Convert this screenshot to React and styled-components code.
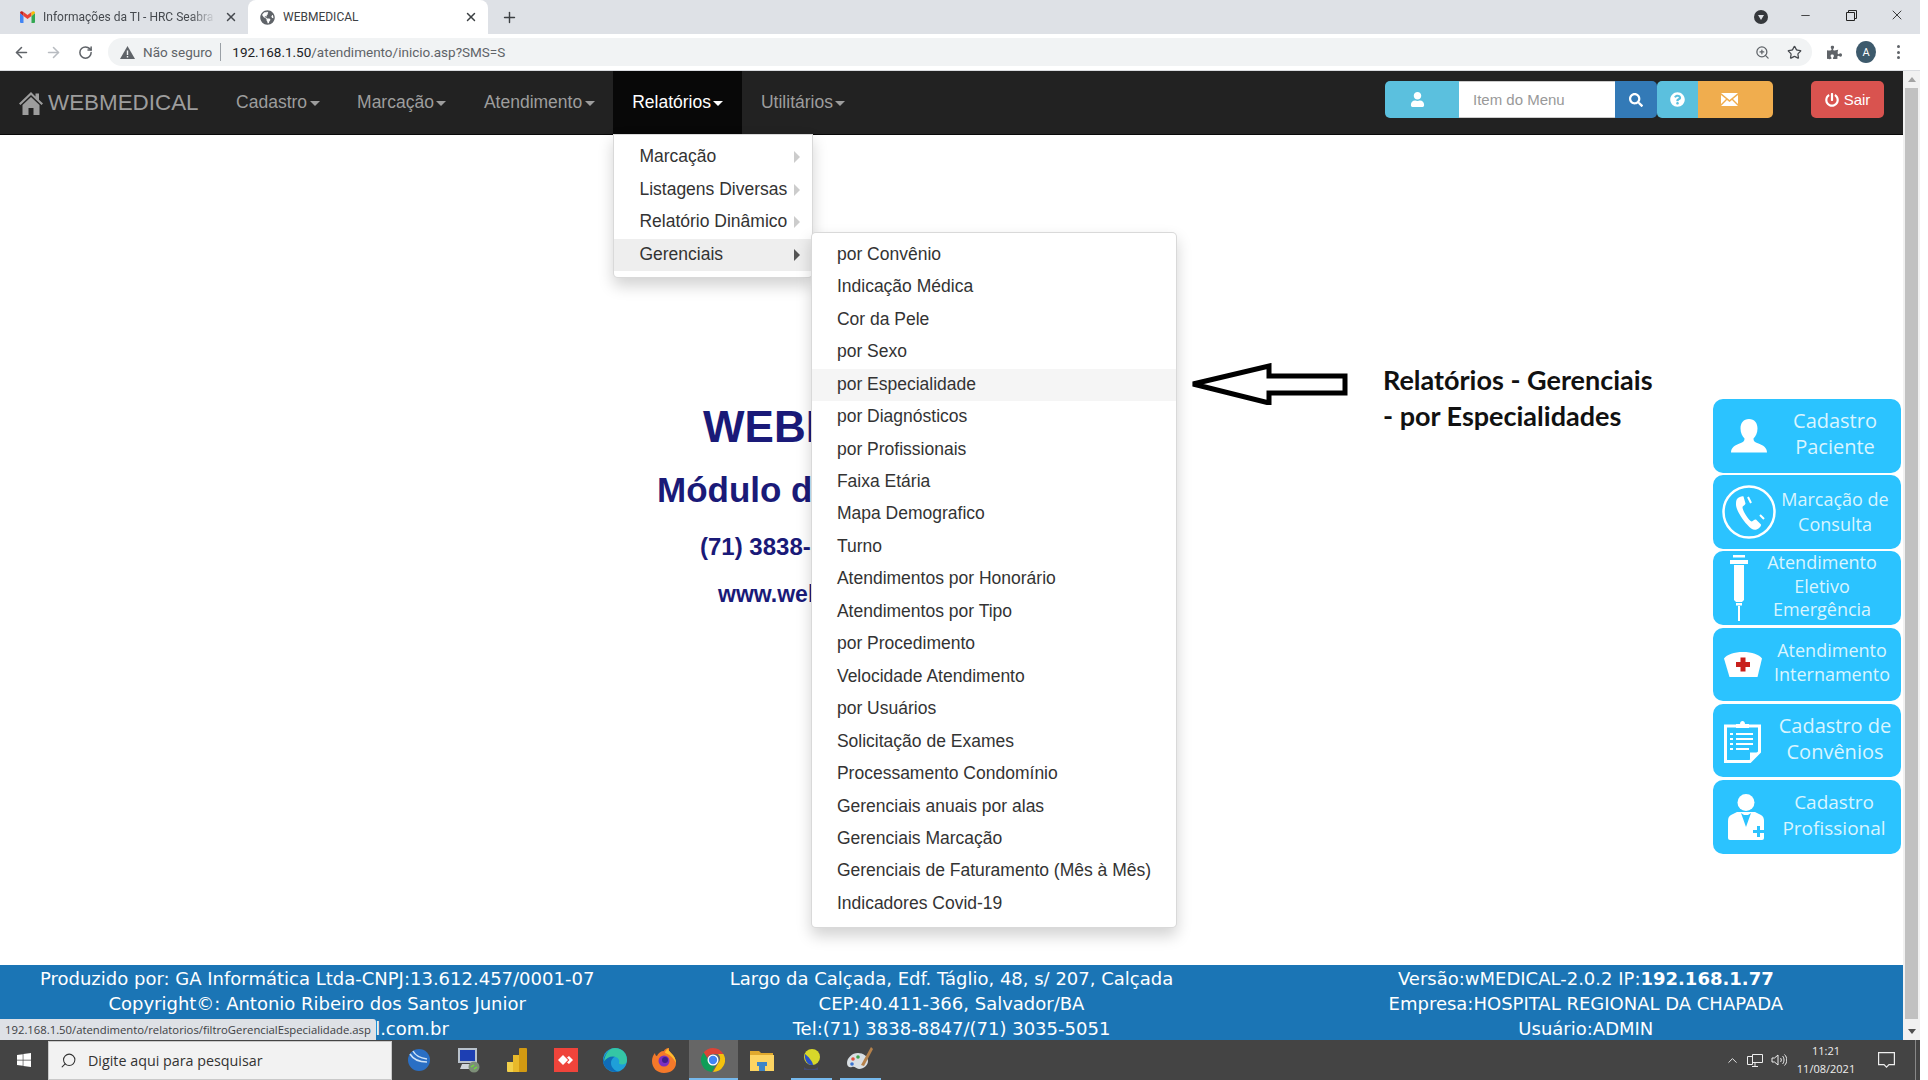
import styled, { createGlobalStyle } from "styled-components";
import {
	FaUser,
	FaSearch,
	FaQuestionCircle,
	FaPowerOff,
	FaWindows,
	FaGlobeAmericas,
	FaPuzzlePiece,
} from "react-icons/fa";
import { ArrowLeft, ArrowRight, RotateCw, ZoomIn, Star, X, Plus, Minus, ChevronUp, Search } from "lucide-react";

const GlobalStyle = createGlobalStyle`
	html, body { margin: 0; padding: 0; background: #fff; overflow: hidden; }
	* { box-sizing: border-box; }
`;

const Screen = styled.div`
	width: 1920px;
	height: 1080px;
	display: flex;
	flex-direction: column;
	font-family: "Liberation Sans", Arial, sans-serif;
	overflow: hidden;
`;

/* ---- browser chrome ---- */
const TabStrip = styled.div`
	height: 34px;
	flex: none;
	display: flex;
	align-items: stretch;
	background: #dee1e6;
	padding-left: 8px;
`;
const Tab = styled.div`
	width: 240px;
	display: flex;
	align-items: center;
	gap: 8px;
	padding: 0 10px 0 12px;
	font: 12px Roboto, sans-serif;
	color: ${(p) => (p.$active ? "#3c4043" : "#45494e")};
	background: ${(p) => (p.$active ? "#fff" : "transparent")};
	border-radius: 8px 8px 0 0;
	svg { flex: none; }
`;
const TabTitle = styled.span`
	flex: 1;
	white-space: nowrap;
	overflow: hidden;
	-webkit-mask-image: ${(p) => (p.$fade ? "linear-gradient(to right, #000 85%, transparent)" : "none")};
`;
const NewTab = styled.div`
	width: 42px;
	display: flex;
	align-items: center;
	justify-content: center;
	color: #3c4043;
`;
const MediaDot = styled.div`
	margin-left: auto;
	margin-right: 14px;
	align-self: center;
	width: 14px;
	height: 14px;
	border-radius: 50%;
	background: #35383c;
	display: flex;
	align-items: center;
	justify-content: center;
	&::after {
		content: "";
		border: 3.5px solid transparent;
		border-top: 5px solid #dee1e6;
		border-bottom: 0;
	}
`;
const WinButton = styled.div`
	width: 46px;
	display: flex;
	align-items: center;
	justify-content: center;
	padding-bottom: 4px;
	color: #222;
`;

const Toolbar = styled.div`
	height: 37px;
	flex: none;
	display: flex;
	align-items: center;
	padding-left: 5px;
	background: #fff;
	border-bottom: 1px solid #dadce0;
`;
const ToolIcon = styled.div`
	width: ${(p) => p.$w || 32}px;
	flex: none;
	display: flex;
	justify-content: center;
	color: ${(p) => p.$color || "#5f6368"};
`;
const Omnibox = styled.div`
	width: 1704px;
	height: 28px;
	margin-left: 7px;
	flex: none;
	display: flex;
	align-items: center;
	padding: 0 2px 0 12px;
	border-radius: 14px;
	background: #f1f3f4;
	font: 13.5px Roboto, sans-serif;
	color: #5f6368;
`;
const NotSecure = styled.span`
	margin-left: 8px;
	padding-right: 8px;
	border-right: 1px solid #9aa0a6;
	line-height: 18px;
`;
const Url = styled.span`
	margin-left: 11px;
	flex: 1;
	b { font-weight: 400; color: #202124; }
`;
const Avatar = styled.div`
	width: 22px;
	height: 22px;
	border-radius: 50%;
	background: #3d5a6c;
	color: #fff;
	font: 11px Roboto, sans-serif;
	display: flex;
	align-items: center;
	justify-content: center;
`;
const Dots = styled.div`
	display: flex;
	flex-direction: column;
	gap: 2.5px;
	i { width: 3px; height: 3px; border-radius: 50%; background: #5f6368; }
`;

/* ---- page ---- */
const Viewport = styled.div`
	flex: 1;
	min-height: 0;
	display: flex;
`;
const Page = styled.div`
	flex: 1;
	min-width: 0;
	display: flex;
	flex-direction: column;
`;
const ScrollTrack = styled.div`
	width: 17px;
	flex: none;
	background: #f1f1f1;
	display: flex;
	flex-direction: column;
	align-items: center;
	padding: 6px 0;
`;
const ScrollUp = styled.i`
	border: 4px solid transparent;
	border-bottom: 5px solid #a3a3a3;
	border-top: 0;
`;
const ScrollDown = styled.i`
	border: 4px solid transparent;
	border-top: 5px solid #505050;
	border-bottom: 0;
`;
const ScrollThumb = styled.div`
	flex: 1;
	width: 13px;
	margin: 6px 0 10px;
	background: #c1c1c1;
`;

const Navbar = styled.nav`
	height: 64px;
	flex: none;
	display: flex;
	background: #222;
	border-bottom: 1px solid #080808;
	position: relative;
	z-index: 5;
`;
const Brand = styled.div`
	display: flex;
	align-items: center;
	gap: 5px;
	padding-left: 19px;
	padding-right: 18.75px;
	font-size: 22.4px;
	color: #9d9d9d;
`;
const NavItem = styled.div`
	position: relative;
	display: flex;
	align-items: center;
	padding: 0 18.75px 1px;
	font-size: 17.5px;
	color: ${(p) => (p.$active ? "#fff" : "#9d9d9d")};
	background: ${(p) => (p.$active ? "#080808" : "transparent")};
`;
const Caret = styled.i`
	margin-left: 2.5px;
	margin-top: 2px;
	border: 5px solid transparent;
	border-top: 5px solid currentColor;
	border-bottom: 0;
`;
const DropMenu = styled.div`
	position: absolute;
	top: ${(p) => (p.$sub ? "-7px" : "100%")};
	left: ${(p) => (p.$sub ? "calc(100% - 1px)" : "0")};
	width: ${(p) => (p.$sub ? "auto" : "199.5px")};
	padding: 6.25px 0;
	background: #fff;
	border: 1px solid rgba(0, 0, 0, 0.15);
	border-radius: ${(p) => (p.$sub ? "5px" : "0 0 5px 5px")};
	box-shadow: 0 7.5px 15px rgba(0, 0, 0, 0.175);
`;
const MenuRow = styled.div`
	position: relative;
	height: 32.46px;
	line-height: 31.5px;
	padding: 0 25px;
	font-size: 17.5px;
	white-space: nowrap;
	color: #333;
	background: ${(p) => (p.$open ? "#eee" : p.$hover ? "#f5f5f5" : "transparent")};
`;
const SubArrow = styled.i`
	position: absolute;
	right: 12px;
	top: 10px;
	border: 6px solid transparent;
	border-left: 6px solid ${(p) => (p.$open ? "#555" : "#ccc")};
	border-right: 0;
`;
const Controls = styled.div`
	margin-left: auto;
	margin-top: 10px;
	height: 37px;
	display: flex;
	font-size: 15px;
`;
const Addon = styled.div`
	width: ${(p) => p.$w}px;
	padding-right: ${(p) => p.$shift || 0}px;
	display: flex;
	align-items: center;
	justify-content: center;
	color: #fff;
	background: ${(p) => p.$bg};
	border-radius: ${(p) => p.$radius || "0"};
`;
const MenuInput = styled.input`
	width: 156px;
	height: 37px;
	border: 1px solid #ccc;
	border-width: 1px 0;
	padding: 0 14px;
	font: 15px "Liberation Sans", Arial, sans-serif;
	outline: none;
	&::placeholder { color: #999; opacity: 1; }
`;
const ExitButton = styled.div`
	margin: 10px 19px 0 38px;
	width: 73px;
	height: 37px;
	display: flex;
	align-items: center;
	justify-content: center;
	gap: 5px;
	border-radius: 5px;
	background: #d9534f;
	color: #fff;
	font-size: 15px;
`;

const Main = styled.main`
	flex: 1;
	min-height: 0;
	position: relative;
	background: #fff;
	padding-top: 268px;
`;
const Line = styled.div`
	margin-left: ${(p) => p.$left}px;
	margin-top: ${(p) => p.$gap || 0}px;
	font-size: ${(p) => p.$size}px;
	line-height: ${(p) => p.$lh}px;
	font-weight: 700;
	color: #1a1a78;
	white-space: nowrap;
`;

const Callout = styled.div`
	position: absolute;
	left: 1189px;
	top: 228px;
	display: flex;
	width: 480px;
`;
const CalloutText = styled.div`
	margin-left: 33px;
	margin-top: -1px;
	width: 285px;
	font: 700 27px/36px Lato, sans-serif;
	color: #111;
`;

const SideMenu = styled.div`
	position: absolute;
	right: 2px;
	top: 264px;
	width: 188px;
	display: flex;
	flex-direction: column;
	gap: 2.6px;
`;
const SideButton = styled.div`
	height: 73.6px;
	display: flex;
	align-items: center;
	border-radius: 10px;
	background: #2bc3ff;
	color: #d9f5ff;
`;
const SideIcon = styled.div`
	flex: none;
	width: ${(p) => p.$slot}px;
	padding-left: ${(p) => p.$pad}px;
	display: flex;
	align-items: center;
`;
const SideLabel = styled.div`
	flex: 1;
	padding-right: ${(p) => p.$pr || 0}px;
	padding-bottom: ${(p) => p.$up || 0}px;
	text-align: center;
	font: ${(p) => p.$size || 19}px/${(p) => p.$lh || 26}px "Open Sans", sans-serif;
	white-space: nowrap;
`;

const Footer = styled.footer`
	height: 75px;
	flex: none;
	position: relative;
	display: grid;
	grid-template-columns: 1fr 1fr 1fr;
	padding-top: 1px;
	background: #1b75b5;
	color: #fff;
	font: 18px/25px "DejaVu Sans", Verdana, sans-serif;
	text-align: center;
	white-space: nowrap;
`;
const StatusBubble = styled.div`
	position: absolute;
	left: 0;
	bottom: 0;
	height: 21px;
	padding: 0 5px;
	border-radius: 0 3px 0 0;
	background: #dee1e6;
	color: #3c4043;
	font: 11.3px/21px "Open Sans", sans-serif;
`;

/* ---- windows taskbar ---- */
const Taskbar = styled.div`
	height: 40px;
	flex: none;
	display: flex;
	background: #444;
`;
const StartButton = styled.div`
	width: 48px;
	display: flex;
	align-items: center;
	justify-content: center;
	color: #fff;
`;
const SearchBox = styled.div`
	width: 344px;
	margin-top: 1px;
	display: flex;
	align-items: center;
	gap: 11px;
	padding-left: 11px;
	background: #f2f2f2;
	border: 1px solid #c9c9c9;
	color: #333;
	font: 14.3px "Open Sans", sans-serif;
`;
const TaskIcons = styled.div`
	display: flex;
	margin-left: 2.5px;
`;
const TaskSlot = styled.div`
	position: relative;
	width: 49px;
	display: flex;
	align-items: center;
	justify-content: center;
	background: ${(p) => (p.$active ? "#666" : "transparent")};
	&::after {
		content: "";
		display: ${(p) => (p.$line ? "block" : "none")};
		position: absolute;
		left: ${(p) => (p.$active ? 0 : 4)}px;
		right: ${(p) => (p.$active ? 0 : 4)}px;
		bottom: 0;
		height: 2px;
		background: #76b9ed;
	}
`;
const Tray = styled.div`
	margin-left: auto;
	display: flex;
	align-items: center;
	color: #eee;
`;
const TrayIcon = styled.div`
	width: ${(p) => p.$w}px;
	display: flex;
	justify-content: center;
`;
const Clock = styled.div`
	width: 60px;
	margin: 0 13px 0 5px;
	text-align: center;
	font: 11px/18px "Open Sans", sans-serif;
`;
const DesktopEdge = styled.div`
	width: 1px;
	height: 100%;
	margin: 0 4px 0 12px;
	background: #888;
`;

/* ---- drawn icons ---- */
const HomeGlyph = () => (
	<svg width="24" height="24" viewBox="0 0 24 24" fill="currentColor">
		<path d="M12 1L0 12.500l1.500 1.500L12 4l10.500 10 1.500-1.500-4-3.800V2.500h-3.500v2.900z" />
		<path d="M12 6L3.500 14v10h6v-7h5v7h6V14z" />
	</svg>
);
const GmailIcon = () => (
	<svg width="15" height="12" viewBox="0 0 15 12">
		<path d="M0 2v9a1 1 0 0 0 1 1h2.500V5z" fill="#4285f4" />
		<path d="M15 2v9a1 1 0 0 1-1 1h-2.500V5z" fill="#34a853" />
		<path d="M3.500 5l4 3 4-3V1l-4 3-4-3z" fill="#ea4335" />
		<path d="M0 2c0-2 2-2.500 3.500-1v4z" fill="#c5221f" />
		<path d="M15 2c0-2-2-2.500-3.500-1v4z" fill="#fbbc04" />
	</svg>
);
const WarnIcon = () => (
	<svg width="15" height="13" viewBox="0 0 15 13">
		<path d="M7.500 0L15 13H0z" fill="#5f6368" />
		<path d="M6.800 4.500h1.400v4.500H6.800zM6.800 10h1.400v1.400H6.800z" fill="#f1f3f4" />
	</svg>
);
const RestoreIcon = () => (
	<svg width="11" height="11" viewBox="0 0 11 11" fill="none" stroke="currentColor">
		<path d="M.5 2.500h8v8h-8zM2.500 2.500v-2h8v8h-2" />
	</svg>
);
const EnvelopeIcon = () => (
	<svg width="17" height="13" viewBox="0 0 17 13">
		<path d="M0 0h17L8.500 7z M0 2l5 4-5 5z M17 2l-5 4 5 5z M0 13l6-6 2.500 2 2.500-2 6 6z" fill="#fff" />
	</svg>
);
const PatientIcon = () => (
	<svg width="36" height="34" viewBox="0 0 36 34" fill="#fff">
		<path d="M18 0c5.500 0 8.500 4 8.500 9.500 0 4.500-2 8-4 10 0 2.500 1 3.500 5 5 4.500 1.600 8.500 4 8.500 9H0c0-5 4-7.400 8.500-9 4-1.500 5-2.500 5-5-2-2-4-5.500-4-10C9.500 4 12.500 0 18 0z" />
	</svg>
);
const PhoneIcon = () => (
	<svg width="54" height="54" viewBox="0 0 54 54" fill="none">
		<circle cx="27" cy="27" r="25.500" stroke="#fff" strokeWidth="2.500" />
		<path d="M15 14c2-2 5-3 6.500-2.500l2 7c0 1.500-3 2.500-3 3.500 0 4 6 13 9 14.500 1 0 3-2.500 4.500-2l5 5c.5 1.500-2 4-4.500 5-3 1-6-1-9-4.500C19 33 14 24 14 19.500c0-2 0-4 1-5.500z" fill="#fff" />
		<path d="M26 12l3 6M38 30l4 4" stroke="#fff" strokeWidth="2" />
	</svg>
);
const SyringeIcon = () => (
	<svg width="18" height="66" viewBox="0 0 18 66" fill="#fff">
		<path d="M3 0h12v2.500H3zM0 5h18v4H0zM4 10h10v35l-2 2H6l-2-2zM6 48h6v2.500H6zM8 51h2v15H8z" />
	</svg>
);
const CapIcon = () => (
	<svg width="38" height="25" viewBox="0 0 38 25">
		<path d="M19 0c9 0 16 2.500 19 6.500L33.500 25h-28L0 6.500C3 2.500 10 0 19 0z" fill="#fff" />
		<path d="M16.500 5.500h5v4.500h4.500v5h-4.500v4.500h-5V15H12v-5h4.500z" fill="#c8201c" />
	</svg>
);
const ClipboardIcon = () => (
	<svg width="37" height="44" viewBox="0 0 37 44" fill="none" stroke="#fff">
		<path d="M1.500 7h34v26l-9.500 9.500H1.500z" strokeWidth="3" />
		<path d="M12 9V5h4c0-4 5-4 5 0h4v4z" fill="#fff" stroke="none" />
		<path d="M12 15h17M12 20h17M12 25h17M12 30h13M6 15h3M6 20h3M6 25h3M6 30h3" strokeWidth="2" />
		<path d="M26 33.500h8L26 41z" fill="#fff" stroke="none" />
	</svg>
);
const DoctorIcon = () => (
	<svg width="36" height="46" viewBox="0 0 36 46">
		<circle cx="18" cy="8.500" r="8.500" fill="#fff" />
		<path d="M9 18h18l6 3c2 1 3 3 3 6v17a2 2 0 0 1-2 2H2a2 2 0 0 1-2-2V27c0-3 1-5 3-6z" fill="#fff" />
		<path d="M13 19l5 14 5-14-3 2h-4z" fill="#2bc3ff" />
		<path d="M25 36h4v-4h3v4h4v3h-4v4h-3v-4h-4z" fill="#2bc3ff" />
	</svg>
);

const ServerSphere = () => (
	<svg width="24" height="24" viewBox="0 0 24 24">
		<circle cx="12" cy="12" r="11" fill="#2a6fc4" />
		<path d="M3 6c3 5 9 8 17 8M6 3c2 4 7 7 14 8" stroke="#cfe3f7" strokeWidth="1.500" fill="none" />
	</svg>
);
const MonitorApp = () => (
	<svg width="24" height="26" viewBox="0 0 24 26">
		<path d="M2 1h19v15H2z" fill="#b9c2cc" />
		<path d="M4 3h15v11H4z" fill="#1d3fb3" />
		<path d="M6 17h12l2 5H4z" fill="#cfd4d9" />
		<circle cx="18" cy="20" r="5.500" fill="#7d8f78" />
		<path d="M15 20l3-2M18 22l3-2" stroke="#6fdc3c" strokeWidth="1.500" />
	</svg>
);
const PowerBi = () => (
	<svg width="20" height="24" viewBox="0 0 20 24">
		<path d="M0 14h7v10H1a1 1 0 0 1-1-1z" fill="#f2d04a" />
		<path d="M6 7h7v17H6z" fill="#e8b92a" />
		<path d="M12 1a1 1 0 0 1 1-1h6a1 1 0 0 1 1 1v22a1 1 0 0 1-1 1h-7z" fill="#d29a12" />
	</svg>
);
const AnyDesk = () => (
	<svg width="24" height="24" viewBox="0 0 24 24">
		<rect width="24" height="24" fill="#ef443b" />
		<path d="M9 7l5 5-5 5-5-5z" fill="#fff" />
		<path d="M15 8l4 4-4 4-2-1.500 2.500-2.500L13 9.500z" fill="#fff" />
	</svg>
);
const EdgeLogo = () => (
	<svg width="24" height="24" viewBox="0 0 24 24">
		<circle cx="12" cy="12" r="12" fill="#1f9fd8" />
		<path d="M24 13c0-3-3-5.500-7-5.500-5 0-9 3-9 7.500s4 8 8 9c-8 1-16-4-16-11.500C2 5 7 0 12 0c7 0 12 6 12 13z" fill="#0f6cb8" />
		<path d="M12 0c7 0 12 5 12 12 0 3-2 4.500-5 4.500-2 0-3.500-1-3-2 1-2-1-6-6-6-4 0-7 2-9 5C2 6 6 0 12 0z" fill="#35c6a5" />
	</svg>
);
const FirefoxLogo = () => (
	<svg width="24" height="25" viewBox="0 0 24 25">
		<path d="M12 25C5 25 0 20 0 13c0-3 1-6 3-8 0 2 1 3 2 3 1-3 4-5 7-5 0-1 2-3 5-3-1 2 0 3 3 6 2 2 4 5 4 9 0 6-5 10-12 10z" fill="#f5792a" />
		<path d="M17 0c-1 2 0 3 3 6 2 2 4 5 4 9-3-6-7-9-11-10 0-2 2-4 4-5z" fill="#ffbd2e" />
		<circle cx="12" cy="13" r="5.500" fill="#7a2fc0" />
		<circle cx="13" cy="12" r="3" fill="#3f1e8c" />
	</svg>
);
const ChromeLogo = () => (
	<svg width="24" height="24" viewBox="0 0 24 24">
		<path d="M12 0a12 12 0 0 1 10.400 6H12a6 6 0 0 0-5.600 3.800L2.700 4.500A12 12 0 0 1 12 0z" fill="#db4437" />
		<path d="M22.400 6A12 12 0 0 1 12 24l5.200-9A6 6 0 0 0 17 6z" fill="#f4c20d" />
		<path d="M2.700 4.500l5.300 9a5 5 0 0 0 6 4.200L10.800 24A12 12 0 0 1 2.700 4.500z" fill="#0f9d58" />
		<circle cx="12" cy="12" r="5.500" fill="#fff" />
		<circle cx="12" cy="12" r="4.200" fill="#4285f4" />
	</svg>
);
const FolderIcon = () => (
	<svg width="24" height="21" viewBox="0 0 24 21">
		<path d="M0 1h9l2 2h12v4H0z" fill="#e0a92e" />
		<path d="M0 5h24v16H0z" fill="#fcd462" />
		<path d="M7 12h10v4h-2v5H9v-5H7z" fill="#3d85c6" />
	</svg>
);
const GlobeStand = () => (
	<svg width="18" height="22" viewBox="0 0 18 22">
		<circle cx="10" cy="8" r="8" fill="#d8d82a" />
		<path d="M3 5c3 2 8 8 8 11-5 1-9-5-8-11z" fill="#2a50c8" />
		<path d="M2 18c3 3 11 3 14 0v3H2z" fill="#444a70" />
	</svg>
);
const PaletteIcon = () => (
	<svg width="26" height="26" viewBox="0 0 26 26">
		<path d="M11 6C5 6 0 11 0 16c0 4 3 5 5 4 3-1 4 2 7 2 5 0 9-4 9-8 0-5-5-8-10-8z" fill="#d9dfe3" />
		<circle cx="6" cy="12" r="1.800" fill="#e0503a" />
		<circle cx="11" cy="10" r="1.800" fill="#3fa34d" />
		<circle cx="5" cy="17" r="1.800" fill="#3a73d0" />
		<path d="M24 0l2 2-9 17-3-1z" fill="#b5814a" />
	</svg>
);

const gerenciais = [
	"por Convênio",
	"Indicação Médica",
	"Cor da Pele",
	"por Sexo",
	"por Especialidade",
	"por Diagnósticos",
	"por Profissionais",
	"Faixa Etária",
	"Mapa Demografico",
	"Turno",
	"Atendimentos por Honorário",
	"Atendimentos por Tipo",
	"por Procedimento",
	"Velocidade Atendimento",
	"por Usuários",
	"Solicitação de Exames",
	"Processamento Condomínio",
	"Gerenciais anuais por alas",
	"Gerenciais Marcação",
	"Gerenciais de Faturamento (Mês à Mês)",
	"Indicadores Covid-19",
];

const sideItems = [
	{ icon: <PatientIcon />, slot: 56, pad: 18, lines: ["Cadastro", "Paciente"], size: 20, lh: 26, up: 3 },
	{ icon: <PhoneIcon />, slot: 63, pad: 9, pr: 7, lines: ["Marcação de", "Consulta"], size: 18, lh: 25, up: 0 },
	{ icon: <SyringeIcon />, slot: 36, pad: 17, pr: 6, lines: ["Atendimento", "Eletivo", "Emergência"], size: 18, lh: 23.5, up: 3 },
	{ icon: <CapIcon />, slot: 50, pad: 11, lines: ["Atendimento", "Internamento"], size: 18, lh: 24, up: 4 },
	{ icon: <ClipboardIcon />, slot: 56, pad: 11, lines: ["Cadastro de", "Convênios"], size: 20, lh: 26, up: 4 },
	{ icon: <DoctorIcon />, slot: 54, pad: 15, lines: ["Cadastro", "Profissional"], size: 19, lh: 25.5, up: 2 },
];

const taskApps = [
	{ icon: <ServerSphere /> },
	{ icon: <MonitorApp /> },
	{ icon: <PowerBi /> },
	{ icon: <AnyDesk /> },
	{ icon: <EdgeLogo /> },
	{ icon: <FirefoxLogo /> },
	{ icon: <ChromeLogo />, active: true, line: true },
	{ icon: <FolderIcon /> },
	{ icon: <GlobeStand />, line: true },
	{ icon: <PaletteIcon />, line: true },
];

const App = () => {
	return (
		<Screen>
			<GlobalStyle />
			<TabStrip>
				<Tab>
					<GmailIcon />
					<TabTitle $fade>Informações da TI - HRC Seabra - Ou</TabTitle>
					<X size={14} strokeWidth={2.5} />
				</Tab>
				<Tab $active>
					<FaGlobeAmericas size={15} color="#5f6368" />
					<TabTitle>WEBMEDICAL</TabTitle>
					<X size={14} strokeWidth={2.5} />
				</Tab>
				<NewTab>
					<Plus size={17} strokeWidth={2} />
				</NewTab>
				<MediaDot />
				<WinButton>
					<Minus size={13} strokeWidth={1.5} />
				</WinButton>
				<WinButton>
					<RestoreIcon />
				</WinButton>
				<WinButton>
					<X size={16} strokeWidth={1.3} />
				</WinButton>
			</TabStrip>
			<Toolbar>
				<ToolIcon>
					<ArrowLeft size={17} strokeWidth={2.2} />
				</ToolIcon>
				<ToolIcon $color="#b8bcc1">
					<ArrowRight size={17} strokeWidth={2.2} />
				</ToolIcon>
				<ToolIcon>
					<RotateCw size={15} strokeWidth={2.4} />
				</ToolIcon>
				<Omnibox>
					<WarnIcon />
					<NotSecure>Não seguro</NotSecure>
					<Url>
						<b>192.168.1.50</b>/atendimento/inicio.asp?SMS=S
					</Url>
					<ToolIcon>
						<ZoomIn size={15} />
					</ToolIcon>
					<ToolIcon>
						<Star size={15} strokeWidth={2} color="#45494e" />
					</ToolIcon>
				</Omnibox>
				<ToolIcon $w={44}>
					<FaPuzzlePiece size={15} />
				</ToolIcon>
				<ToolIcon $w={20}>
					<Avatar>A</Avatar>
				</ToolIcon>
				<ToolIcon $w={44}>
					<Dots>
						<i />
						<i />
						<i />
					</Dots>
				</ToolIcon>
			</Toolbar>
			<Viewport>
				<Page>
					<Navbar>
						<Brand>
							<HomeGlyph />
							WEBMEDICAL
						</Brand>
						<NavItem>
							Cadastro
							<Caret />
						</NavItem>
						<NavItem>
							Marcação
							<Caret />
						</NavItem>
						<NavItem>
							Atendimento
							<Caret />
						</NavItem>
						<NavItem $active>
							Relatórios
							<Caret />
							<DropMenu>
								<MenuRow>
									Marcação
									<SubArrow />
								</MenuRow>
								<MenuRow>
									Listagens Diversas
									<SubArrow />
								</MenuRow>
								<MenuRow>
									Relatório Dinâmico
									<SubArrow />
								</MenuRow>
								<MenuRow $open>
									Gerenciais
									<SubArrow $open />
									<DropMenu $sub>
										{gerenciais.map((item) => (
											<MenuRow key={item} $hover={item === "por Especialidade"}>
												{item}
											</MenuRow>
										))}
									</DropMenu>
								</MenuRow>
							</DropMenu>
						</NavItem>
						<NavItem>
							Utilitários
							<Caret />
						</NavItem>
						<Controls>
							<Addon $w={74} $shift={10} $bg="#5bc0de" $radius="5px 0 0 5px">
								<FaUser size={15} />
							</Addon>
							<MenuInput placeholder="Item do Menu" />
							<Addon $w={42} $bg="#337ab7" $radius="0 5px 5px 0">
								<FaSearch size={14} />
							</Addon>
							<Addon $w={41} $bg="#5bc0de" $radius="5px 0 0 5px">
								<FaQuestionCircle size={15} />
							</Addon>
							<Addon $w={75} $shift={13} $bg="#f0ad4e" $radius="0 5px 5px 0">
								<EnvelopeIcon />
							</Addon>
						</Controls>
						<ExitButton>
							<FaPowerOff size={14} />
							Sair
						</ExitButton>
					</Navbar>
					<Main>
						<Line $left={703} $size={44} $lh={48}>
							WEBMEDICAL
						</Line>
						<Line $left={657} $size={35} $lh={42} $gap={18}>
							Módulo de Atendimento
						</Line>
						<Line $left={700} $size={24} $lh={30} $gap={21}>
							(71) 3838-8847
						</Line>
						<Line $left={718} $size={23} $lh={28} $gap={18}>
							www.webmedical.com.br
						</Line>
						<Callout>
							<svg width="161" height="42" viewBox="0 0 161 42" fill="none" style={{ flex: "none" }}>
								<path d="M4 21L80 3v10h76v17H80v10z" stroke="#000" strokeWidth="5" />
							</svg>
							<CalloutText>Relatórios - Gerenciais - por Especialidades</CalloutText>
						</Callout>
						<SideMenu>
							{sideItems.map((item) => (
								<SideButton key={item.lines.join(" ")}>
									<SideIcon $slot={item.slot} $pad={item.pad}>
										{item.icon}
									</SideIcon>
									<SideLabel $size={item.size} $lh={item.lh} $pr={item.pr} $up={item.up}>
										{item.lines.map((l) => (
											<div key={l}>{l}</div>
										))}
									</SideLabel>
								</SideButton>
							))}
						</SideMenu>
					</Main>
					<Footer>
						<div>
							<div>Produzido por: GA Informática Ltda-CNPJ:13.612.457/0001-07</div>
							<div>Copyright©: Antonio Ribeiro dos Santos Junior</div>
							<div>contato@webmedical.com.br</div>
						</div>
						<div>
							<div>Largo da Calçada, Edf. Táglio, 48, s/ 207, Calçada</div>
							<div>CEP:40.411-366, Salvador/BA</div>
							<div>Tel:(71) 3838-8847/(71) 3035-5051</div>
						</div>
						<div>
							<div>
								Versão:wMEDICAL-2.0.2 IP:<b>192.168.1.77</b>
							</div>
							<div>Empresa:HOSPITAL REGIONAL DA CHAPADA</div>
							<div>Usuário:ADMIN</div>
						</div>
						<StatusBubble>192.168.1.50/atendimento/relatorios/filtroGerencialEspecialidade.asp</StatusBubble>
					</Footer>
				</Page>
				<ScrollTrack>
					<ScrollUp />
					<ScrollThumb />
					<ScrollDown />
				</ScrollTrack>
			</Viewport>
			<Taskbar>
				<StartButton>
					<FaWindows size={16} />
				</StartButton>
				<SearchBox>
					<Search size={17} strokeWidth={1.5} style={{ transform: "scaleX(-1)" }} />
					Digite aqui para pesquisar
				</SearchBox>
				<TaskIcons>
					{taskApps.map((app, i) => (
						<TaskSlot key={i} $active={app.active} $line={app.line}>
							{app.icon}
						</TaskSlot>
					))}
				</TaskIcons>
				<Tray>
					<TrayIcon $w={22}>
						<ChevronUp size={15} strokeWidth={1.5} />
					</TrayIcon>
					<TrayIcon $w={24}>
						<svg width="16" height="15" viewBox="0 0 16 15" fill="none" stroke="currentColor">
							<path d="M5.500 1.500h10v8h-10zM.5 3.500h5v8h-5zM8 9.500v4M5 13.500h6" />
						</svg>
					</TrayIcon>
					<TrayIcon $w={24}>
						<svg width="16" height="14" viewBox="0 0 16 14" fill="none" stroke="currentColor">
							<path d="M1 5h2.500L7 2v10L3.500 9H1zM9.500 5c1 1 1 3 0 4M11.500 3c2 2 2 6 0 8M13.500 1.500c3 3 3 8 0 11" />
						</svg>
					</TrayIcon>
					<Clock>
						<div>11:21</div>
						<div>11/08/2021</div>
					</Clock>
					<TrayIcon $w={34}>
						<svg width="17" height="16" viewBox="0 0 17 16" fill="none" stroke="currentColor" strokeWidth="1.200">
							<path d="M.6.6h15.800v12H11l-2.500 2.500L6 12.600H.6z" />
						</svg>
					</TrayIcon>
					<DesktopEdge />
				</Tray>
			</Taskbar>
		</Screen>
	);
};

export default App;
